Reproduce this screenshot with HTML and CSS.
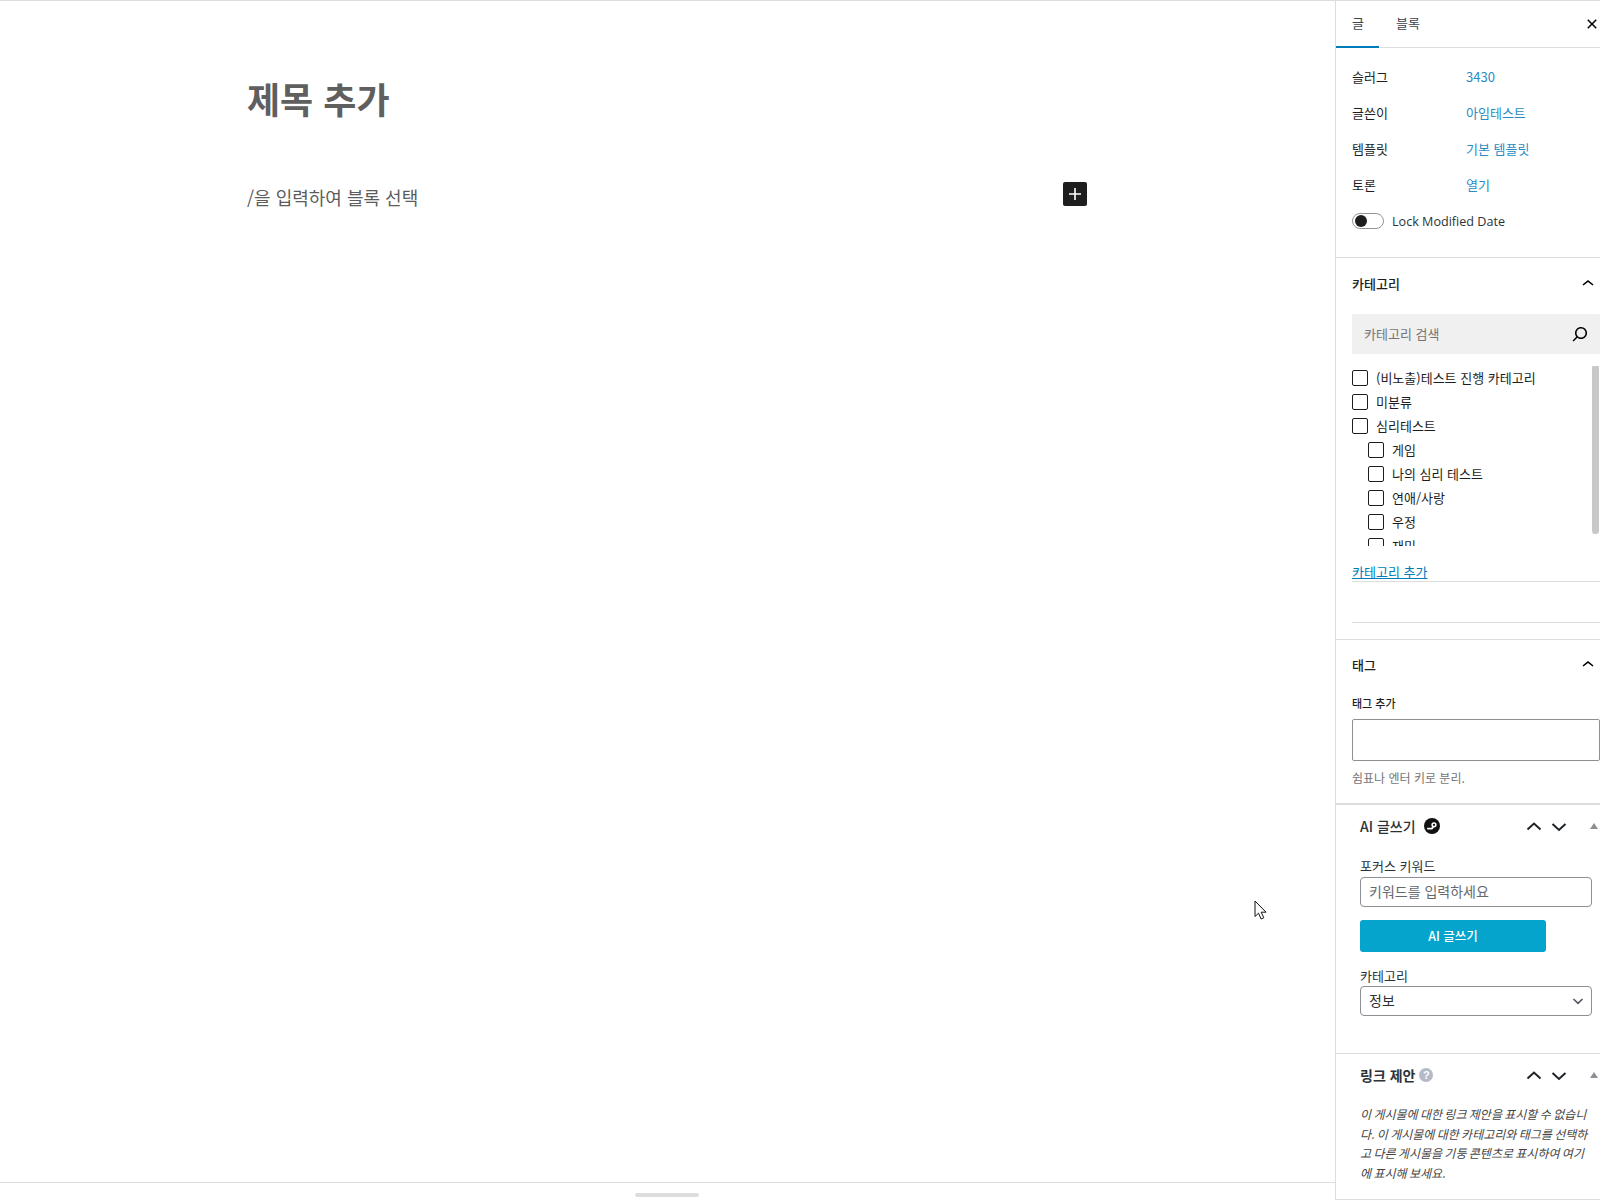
FILE: index.html
```html
<!DOCTYPE html>
<html lang="ko">
<head>
<meta charset="utf-8">
<title>새 글 추가</title>
<link rel="stylesheet" href="styles.css">
</head>
<body>
<div class="app">
  <main class="editor">
    <div class="canvas">
      <h1 class="title">제목 추가</h1>
      <div class="block-row">
        <p class="block-hint">/을 입력하여 블록 선택</p>
        <span class="inserter"><svg viewBox="0 0 24 24" width="24" height="24"><path fill="#fff" d="M18 11.2h-5.2V6h-1.6v5.2H6v1.6h5.2V18h1.6v-5.2H18z"/></svg></span>
      </div>
    </div>
    <div class="resize-bar"><span class="resize-handle"></span></div>
  </main>
  <aside class="sidebar">
    <div class="tabs">
      <span class="tab tab-active">글</span>
      <span class="tab tab-block">블록</span>
      <svg class="close" viewBox="0 0 24 24" width="24" height="24"><path d="M12 13.06l3.712 3.713 1.061-1.06L13.061 12l3.712-3.712-1.06-1.06L12 10.938 8.288 7.227l-1.061 1.06L10.939 12l-3.712 3.712 1.06 1.061L12 13.061z"/></svg>
    </div>

    <section class="panel summary">
      <div class="row row-text"><span class="row-label">슬러그</span><a class="row-value">3430</a></div>
      <div class="row row-text"><span class="row-label">글쓴이</span><a class="row-value">아임테스트</a></div>
      <div class="row row-text"><span class="row-label">템플릿</span><a class="row-value">기본 템플릿</a></div>
      <div class="row row-text"><span class="row-label">토론</span><a class="row-value">열기</a></div>
      <div class="row"><span class="toggle"><span class="knob"></span></span><span class="toggle-label">Lock Modified Date</span></div>
    </section>

    <section class="panel categories">
      <div class="panel-head"><span>카테고리</span>
        <svg viewBox="0 0 24 24" width="24" height="24"><path d="M6.5 12.4L12 8l5.5 4.4-.9 1.2L12 10l-4.5 3.6-1-1.2z"/></svg></div>
      <div class="search"><span>카테고리 검색</span>
        <svg viewBox="0 0 24 24" width="24" height="24"><path d="M13 5c-3.3 0-6 2.7-6 6 0 1.4.5 2.7 1.3 3.7l-3.8 3.8 1.1 1.1 3.8-3.8c1 .8 2.3 1.3 3.7 1.3 3.3 0 6-2.7 6-6S16.3 5 13 5zm0 10.5c-2.5 0-4.5-2-4.5-4.5s2-4.5 4.5-4.5 4.5 2 4.5 4.5-2 4.5-4.5 4.5z"/></svg></div>
      <div class="cat-wrap">
        <ul class="cat-list">
          <li><i class="check"></i>(비노출)테스트 진행 카테고리</li>
          <li><i class="check"></i>미분류</li>
          <li><i class="check"></i>심리테스트</li>
          <li class="child"><i class="check"></i>게임</li>
          <li class="child"><i class="check"></i>나의 심리 테스트</li>
          <li class="child"><i class="check"></i>연애/사랑</li>
          <li class="child"><i class="check"></i>우정</li>
          <li class="child"><i class="check"></i>재미</li>
        </ul>
        <span class="thumb"></span>
      </div>
      <div class="add-cat"><a>카테고리 추가</a></div>
      <div class="cat-foot"></div>
    </section>

    <section class="panel tags">
      <div class="panel-head"><span>태그</span>
        <svg viewBox="0 0 24 24" width="24" height="24"><path d="M6.5 12.4L12 8l5.5 4.4-.9 1.2L12 10l-4.5 3.6-1-1.2z"/></svg></div>
      <div class="tag-label">태그 추가</div>
      <div class="tag-input"></div>
      <div class="tag-help">쉼표나 엔터 키로 분리.</div>
    </section>

    <section class="metabox ai">
      <div class="meta-head">
        <span class="meta-title">AI 글쓰기</span>
        <svg class="ai-logo" viewBox="0 0 16 16" width="16" height="16"><circle cx="8" cy="8" r="8" fill="#111"/><path fill="none" stroke="#fff" stroke-width="1.8" stroke-linecap="round" d="M3.800 10.600h3.200c1 0 1.500-.6 1.800-1.300"/><circle cx="10" cy="6.800" r="1.900" fill="none" stroke="#fff" stroke-width="1.500"/></svg>
        <span class="meta-controls">
          <svg viewBox="0 0 16 16" width="16" height="16"><path class="chev" d="M1.500 11.500L8 5.500l6.500 6"/></svg>
          <svg viewBox="0 0 16 16" width="16" height="16"><path class="chev" d="M1.500 6L8 12l6.500-6"/></svg>
          <i class="tri"></i>
        </span>
      </div>
      <div class="ai-body">
        <label class="ai-label">포커스 키워드</label>
        <div class="ai-input ai-placeholder">키워드를 입력하세요</div>
        <div class="ai-button">AI 글쓰기</div>
        <label class="ai-label">카테고리</label>
        <div class="ai-input ai-select"><span>정보</span>
          <svg viewBox="0 0 16 16" width="16" height="16"><path fill="none" stroke="#50575e" stroke-width="1.600" d="M3.500 6l4.500 4.300L12.500 6"/></svg></div>
      </div>
    </section>

    <section class="metabox links">
      <div class="meta-head">
        <span class="meta-title strong">링크 제안</span>
        <span class="help-dot">?</span>
        <span class="meta-controls">
          <svg viewBox="0 0 16 16" width="16" height="16"><path class="chev" d="M1.500 11.500L8 5.500l6.500 6"/></svg>
          <svg viewBox="0 0 16 16" width="16" height="16"><path class="chev" d="M1.500 6L8 12l6.500-6"/></svg>
          <i class="tri"></i>
        </span>
      </div>
      <p class="link-note">이 게시물에 대한 링크 제안을 표시할 수 없습니다. 이 게시물에 대한 카테고리와 태그를 선택하고 다른 게시물을 기둥 콘텐츠로 표시하여 여기에 표시해 보세요.</p>
    </section>
  </aside>
</div>
<svg class="cursor" viewBox="0 0 14 22" width="14" height="22"><path fill="#fff" stroke="#111" stroke-width="1" d="M1 1v15.500l3.500-3.300 2.600 5.800 2.700-1.200-2.600-5.600h4.800z"/></svg>
</body>
</html>
```
FILE: styles.css
```css
* { box-sizing: border-box; }
html, body { margin: 0; height: 100%; }
body {
  position: relative;
  overflow: hidden;
  background: #fff;
  color: #1e1e1e;
  font-family: "Noto Sans CJK KR", "Noto Sans", sans-serif;
  font-size: 13px;
}
.app {
  display: flex;
  height: 1200px;
  border-top: 1px solid #ddd;
}
.editor {
  flex: 1;
  min-width: 0;
  display: flex;
  flex-direction: column;
}
.canvas {
  flex: 1;
  width: 840px;
  margin-left: 247px;
  padding-top: 73px;
}
.title {
  margin: 0;
  font-size: 36px;
  line-height: 48px;
  font-weight: 700;
  color: #5f5f5f;
}
.block-row {
  margin-top: 60px;
  display: flex;
  justify-content: space-between;
  align-items: flex-start;
}
.block-hint {
  margin: 0;
  font-size: 18px;
  line-height: 28px;
  padding-top: 1px;
  color: #5c5c5c;
}
.inserter {
  display: flex;
  width: 24px;
  height: 24px;
  background: #1e1e1e;
  border-radius: 2px;
}
.resize-bar {
  height: 18px;
  border-top: 1px solid #ddd;
  display: flex;
  justify-content: center;
  padding-top: 10px;
}
.resize-handle {
  width: 64px;
  height: 4px;
  margin-right: 1px;
  background: #ddd;
  border-radius: 2px;
}
.sidebar {
  width: 265px;
  flex: none;
  border-left: 1px solid #ddd;
  overflow: hidden;
}
.tabs {
  display: flex;
  align-items: center;
  height: 47px;
  border-bottom: 1px solid #ddd;
}
.tab {
  height: 47px;
  padding: 0 16px;
  line-height: 44px;
  color: #3c434a;
}
.tab-block { margin-left: 1px; }
.tab-active {
  width: 43px;
  border-bottom: 2px solid #007cba;
  margin-bottom: -1px;
}
.close { margin-left: auto; margin-right: -4px; }
.panel { padding-left: 16px; border-bottom: 1px solid #ddd; }
.summary { padding: 11px 0 18px 16px; }
.row { display: flex; align-items: center; height: 36px; }
.row-text { padding-bottom: 2px; }
.row-label { width: 114px; }
.row-value { color: #2a8cc4; }
.toggle {
  position: relative;
  display: block;
  width: 32px;
  height: 16px;
  border: 1px solid #949494;
  border-radius: 8px;
  margin-right: 8px;
}
.knob {
  position: absolute;
  left: 2px;
  top: 1px;
  width: 12px;
  height: 12px;
  border-radius: 50%;
  background: #1e1e1e;
}
.toggle-label { font-family: "Open Sans", "Noto Sans", sans-serif; font-size: 12.6px; color: #2c3338; }
.panel-head {
  display: flex;
  justify-content: space-between;
  align-items: flex-start;
  height: 56px;
  padding-top: 12px;
  font-weight: 500;
}
.panel-head span { line-height: 28px; }
.panel-head svg { margin-top: 2px; }
.search {
  display: flex;
  align-items: center;
  justify-content: space-between;
  height: 40px;
  padding: 0 8px 0 12px;
  background: #f0f0f0;
  border-radius: 2px;
  color: #757575;
}
.search span { padding-bottom: 2px; }
.cat-wrap {
  display: flex;
  height: 180px;
  margin-top: 12px;
  overflow: hidden;
}
.cat-list {
  flex: 1;
  margin: 0;
  padding: 0;
  list-style: none;
}
.cat-list li {
  display: flex;
  align-items: center;
  height: 24px;
  gap: 8px;
  padding-bottom: 2px;
}
.cat-list .child { padding-left: 16px; }
.check {
  flex: none;
  width: 16px;
  height: 16px;
  margin-top: 2px;
  border: 1px solid #1e1e1e;
  border-radius: 2px;
}
.thumb {
  flex: none;
  width: 7px;
  height: 169px;
  margin: -1px 1px 0 0;
  border-radius: 3px;
  background: #c8c8c8;
}
.add-cat {
  height: 20px;
  margin-top: 16px;
  line-height: 20px;
  border-bottom: 1px solid #ddd;
}
.add-cat a { color: #007cba; text-decoration: underline; }
.cat-foot {
  height: 41px;
  margin-bottom: 16px;
  border-bottom: 1px solid #ddd;
}
.tags { padding-bottom: 16px; border-bottom: 2px solid #ddd; }
.tags .panel-head { height: 55px; padding-top: 11px; }
.tag-label { font-size: 11px; line-height: 16px; font-weight: 500; }
.tag-input {
  height: 42px;
  margin-top: 8px;
  border: 1px solid #8c8f94;
  border-radius: 2px;
}
.tag-help { margin-top: 8px; font-size: 12px; line-height: 18px; color: #757575; }
.metabox { border-bottom: 1px solid #ddd; }
.ai { height: 249px; }
.meta-head {
  display: flex;
  align-items: center;
  height: 42px;
  padding-left: 24px;
}
.meta-title { font-size: 14px; font-weight: 500; color: #2c3338; }
.meta-title.strong { font-weight: 700; }
.ai-logo { margin-left: 8px; }
.meta-controls {
  display: flex;
  align-items: center;
  gap: 9px;
  margin-left: auto;
  width: 74px;
}
.chev { fill: none; stroke: #1d2327; stroke-width: 2; }
.tri {
  width: 0;
  height: 0;
  margin-left: 14px;
  border: 4px solid transparent;
  border-top: 0;
  border-bottom: 6px solid #8c8f94;
}
.ai-body { padding: 11px 8px 0 24px; }
.ai-label { display: block; line-height: 16px; padding-bottom: 2px; color: #2c3338; }
.ai-input {
  height: 30px;
  margin-top: 1px;
  padding: 0 8px 2px;
  border: 1px solid #8c8f94;
  border-radius: 4px;
  line-height: 26px;
  font-size: 14px;
}
.ai-placeholder { color: #646970; }
.ai-select {
  display: flex;
  align-items: center;
  justify-content: space-between;
  margin-top: 0;
  color: #2c3338;
  padding-right: 5px;
}
.ai-select svg { margin-top: 2px; }
.ai-button {
  width: 186px;
  height: 32px;
  margin: 13px 0 16px;
  border-radius: 3px;
  background: #04a4cc;
  color: #fff;
  text-align: center;
  line-height: 31px;
  font-weight: 500;
  font-size: 12.500px;
}
.links { height: 146px; }
.links .meta-head { height: 42px; }
.help-dot {
  width: 14px;
  height: 14px;
  margin-left: 4px;
  border-radius: 50%;
  background: #b4b9c8;
  color: #fff;
  font: 700 11px/14px "Liberation Sans", sans-serif;
  text-align: center;
}
.link-note {
  margin: 8px 10px 0 24px;
  font-size: 12px;
  word-spacing: -1px;
  line-height: 19.500px;
  font-style: italic;
  color: #444;
}
.cursor {
  position: absolute;
  left: 1254px;
  top: 900px;
}
```
